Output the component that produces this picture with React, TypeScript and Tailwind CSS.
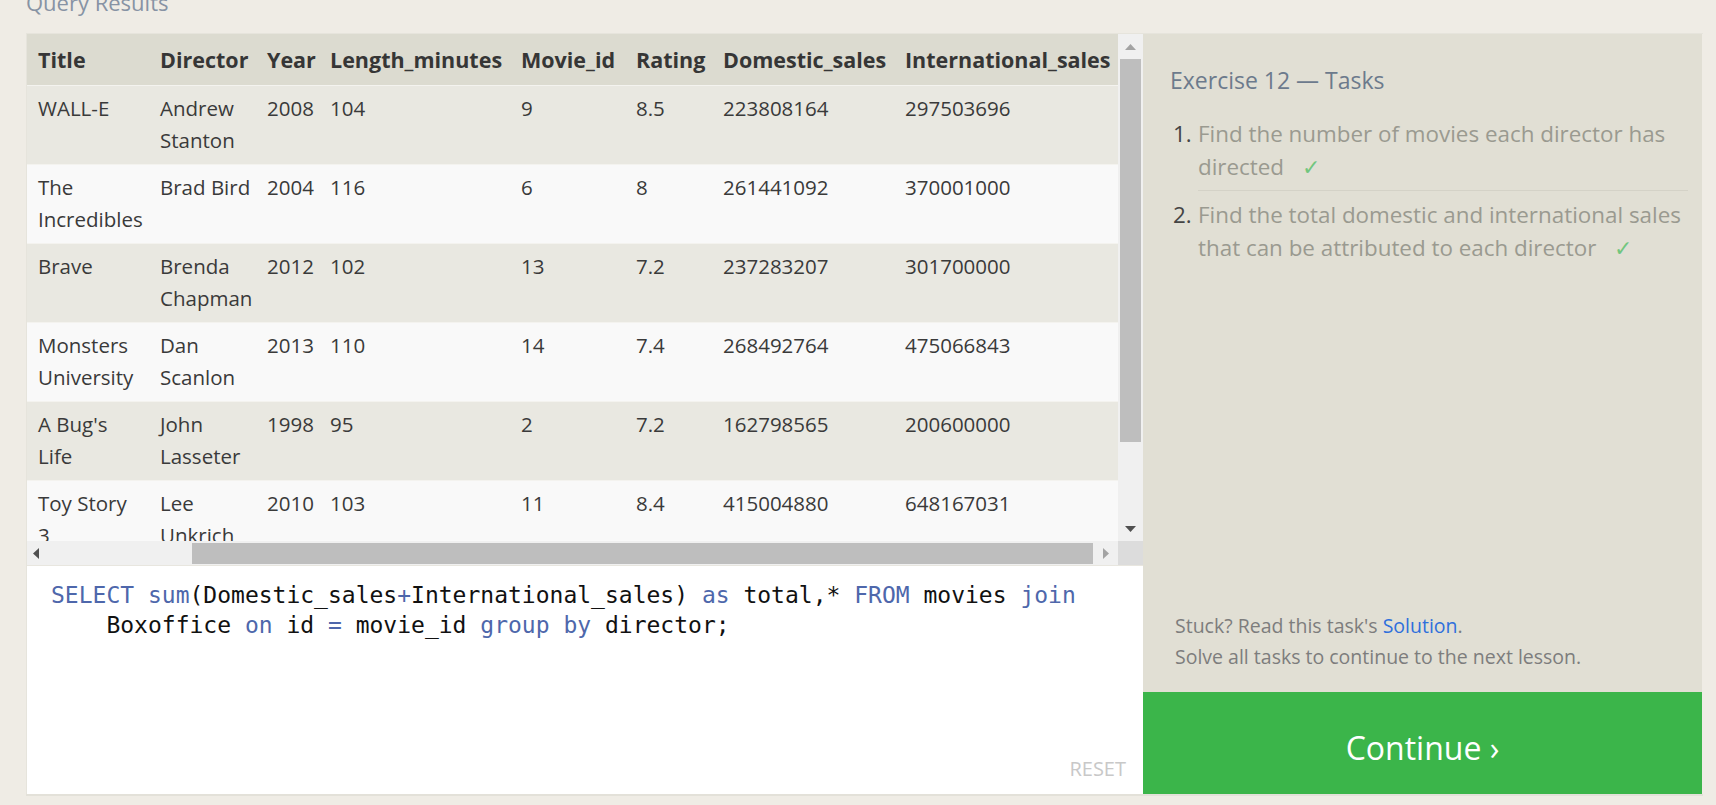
import React from "react";

const rows: string[][][] = [
  [["WALL-E"], ["Andrew", "Stanton"], ["2008"], ["104"], ["9"], ["8.5"], ["223808164"], ["297503696"]],
  [["The", "Incredibles"], ["Brad Bird"], ["2004"], ["116"], ["6"], ["8"], ["261441092"], ["370001000"]],
  [["Brave"], ["Brenda", "Chapman"], ["2012"], ["102"], ["13"], ["7.2"], ["237283207"], ["301700000"]],
  [["Monsters", "University"], ["Dan", "Scanlon"], ["2013"], ["110"], ["14"], ["7.4"], ["268492764"], ["475066843"]],
  [["A Bug's", "Life"], ["John", "Lasseter"], ["1998"], ["95"], ["2"], ["7.2"], ["162798565"], ["200600000"]],
  [["Toy Story", "3"], ["Lee", "Unkrich"], ["2010"], ["103"], ["11"], ["8.4"], ["415004880"], ["648167031"]],
  [["Cars"], ["John", "Lasseter"], ["2006"], ["117"], ["7"], ["7.2"], ["244082982"], ["217900167"]],
];

const headers = ["Title", "Director", "Year", "Length_minutes", "Movie_id", "Rating", "Domestic_sales", "International_sales"];
const widths = [122, 107, 63, 191, 115, 87, 182, 224];

const KW = "text-[#4e67ab]";

export default function App() {
  return (
    <div
      className="w-full h-[805px] bg-[#efece5] overflow-hidden text-[#333]"
      style={{ fontFamily: '"Open Sans", "Noto Sans", sans-serif' }}
    >
      <div className="ml-[26px] w-[1677px]">
        <div className="h-[33px] overflow-hidden">
          <div className="-mt-[14px] text-[22px] leading-[32px] text-[#8793a4]">Query Results</div>
        </div>
        <div className="flex border-t border-[#e6e4dc] border-b-2 border-b-[#e3e1d9]">
          {/* left pane */}
          <div className="w-[1117px] flex flex-col border-l border-[#e6e4dc]">
            <div className="flex h-[507px]">
              <div className="w-[1091px] h-[507px] overflow-hidden">
                <table className="table-fixed border-collapse w-[1091px] text-[20.5px] leading-[32px] text-left">
                  <colgroup>
                    {widths.map((w, i) => (
                      <col key={i} style={{ width: w }} />
                    ))}
                  </colgroup>
                  <thead>
                    <tr className="bg-[#dcdbd0]">
                      {headers.map((h) => (
                        <th
                          key={h}
                          className="font-bold text-[21.5px] px-[11px] py-[9.5px] whitespace-nowrap text-[#363636] align-top"
                        >
                          {h}
                        </th>
                      ))}
                    </tr>
                  </thead>
                  <tbody>
                    {rows.map((r, i) => (
                      <tr key={i} className={`${i % 2 === 0 ? "bg-[#e9e8e1]" : "bg-[#f9f9f9]"} border-t border-[#f4f3ef]`}>
                        {r.map((cell, j) => (
                          <td key={j} className="px-[11px] pt-[6px] pb-[8px] align-top text-[#3a3a3a]">
                            {cell.map((line, k) => (
                              <div key={k} className="whitespace-nowrap">
                                {line}
                              </div>
                            ))}
                          </td>
                        ))}
                      </tr>
                    ))}
                  </tbody>
                </table>
              </div>
              {/* vertical scrollbar */}
              <div className="w-[25px] bg-[#f0f0f0] flex flex-col">
                <div className="h-[25px] flex items-center justify-center">
                  <svg width="11" height="6" viewBox="0 0 11 6">
                    <polygon points="0,6 11,6 5.5,0" fill="#a3a3a3" />
                  </svg>
                </div>
                <div className="mx-[2px] h-[383px] bg-[#bebebe]" />
                <div className="flex-1" />
                <div className="h-[25px] flex items-center justify-center">
                  <svg width="11" height="6" viewBox="0 0 11 6">
                    <polygon points="0,0 11,0 5.5,6" fill="#505050" />
                  </svg>
                </div>
              </div>
            </div>
            {/* horizontal scrollbar */}
            <div className="flex h-[24px] bg-[#f0f0f0]">
              <div className="w-[1091px] flex items-center">
                <div className="w-[18px] flex items-center justify-center">
                  <svg width="6" height="11" viewBox="0 0 6 11">
                    <polygon points="6,0 6,11 0,5.5" fill="#505050" />
                  </svg>
                </div>
                <div className="ml-[147px] w-[901px] h-[21px] bg-[#bebebe]" />
                <div className="flex-1 flex items-center justify-center">
                  <svg width="6" height="11" viewBox="0 0 6 11">
                    <polygon points="0,0 0,11 6,5.5" fill="#a3a3a3" />
                  </svg>
                </div>
              </div>
              <div className="w-[25px] bg-[#dcdcdc]" />
            </div>
            {/* editor */}
            <div className="h-[229px] bg-white border-t border-[#e8e6df] flex flex-col">
              <div
                className="pt-[14px] pl-[24px] text-[23px] leading-[30px] text-[#111] whitespace-pre"
                style={{ fontFamily: '"DejaVu Sans Mono", "Liberation Mono", monospace' }}
              >
                <div>
                  <span className={KW}>SELECT</span> <span className={KW}>sum</span>(Domestic_sales
                  <span className={KW}>+</span>International_sales) <span className={KW}>as</span> total,*{" "}
                  <span className={KW}>FROM</span> movies <span className={KW}>join</span>
                </div>
                <div>
                  {"    "}Boxoffice <span className={KW}>on</span> id <span className={KW}>=</span> movie_id{" "}
                  <span className={KW}>group</span> <span className={KW}>by</span> director;
                </div>
              </div>
              <div className="flex-1" />
              <div className="flex justify-end pr-[17px] pb-[12px] text-[20px] leading-[26px] text-[#c8c8c8]">RESET</div>
            </div>
          </div>
          {/* right pane */}
          <div className="w-[559px] bg-[#e1dfd4] flex flex-col">
            <div className="flex-1 pl-[27px] pr-[14px] pt-[31px]">
              <div className="text-[23px] leading-[30px] text-[#6c7a8c]">Exercise 12 — Tasks</div>
              <ol className="mt-[22px] text-[22.4px] leading-[33px]">
                <li className="flex">
                  <span className="w-[28px] pl-[3px] text-[#444]">1.</span>
                  <div className="flex-1 text-[#9a9a90] pb-[7px] border-b border-[#d4d2c7]">
                    <div className="whitespace-nowrap">Find the number of movies each director has</div>
                    <div className="whitespace-nowrap">
                      directed <span className="ml-[12px] text-[#72c67e]">✓</span>
                    </div>
                  </div>
                </li>
                <li className="flex pt-[7px]">
                  <span className="w-[28px] pl-[3px] text-[#444]">2.</span>
                  <div className="flex-1 text-[#9a9a90]">
                    <div className="whitespace-nowrap">Find the total domestic and international sales</div>
                    <div className="whitespace-nowrap">
                      that can be attributed to each director <span className="ml-[12px] text-[#72c67e]">✓</span>
                    </div>
                  </div>
                </li>
              </ol>
            </div>
            <div className="pl-[32px] pb-[20px] text-[19.5px] leading-[31px] text-[#7d7d7d]">
              <div>
                Stuck? Read this task's <span className="text-[#2f6fdc]">Solution</span>.
              </div>
              <div>Solve all tasks to continue to the next lesson.</div>
            </div>
            <div className="h-[102px] pt-[10px] bg-[#3bb54a] flex items-center justify-center text-white text-[32px]">
              Continue ›
            </div>
          </div>
        </div>
      </div>
    </div>
  );
}
